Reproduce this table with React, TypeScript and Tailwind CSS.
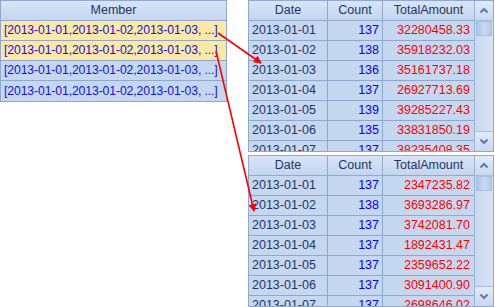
import React from "react";

const font = { fontFamily: '"Liberation Sans", Arial, sans-serif' };

const top = [
  ["2013-01-01", "137", "32280458.33"],
  ["2013-01-02", "138", "35918232.03"],
  ["2013-01-03", "136", "35161737.18"],
  ["2013-01-04", "137", "26927713.69"],
  ["2013-01-05", "139", "39285227.43"],
  ["2013-01-06", "135", "33831850.19"],
  ["2013-01-07", "137", "38235408.35"],
];
const bottom = [
  ["2013-01-01", "137", "2347235.82"],
  ["2013-01-02", "138", "3693286.97"],
  ["2013-01-03", "137", "3742081.70"],
  ["2013-01-04", "137", "1892431.47"],
  ["2013-01-05", "137", "2359652.22"],
  ["2013-01-06", "137", "3091400.90"],
  ["2013-01-07", "137", "2698646.02"],
];

function Chevron({ up }: { up?: boolean }) {
  return (
    <svg width="10" height="7" viewBox="0 0 10 7">
      <path
        d={up ? "M1.5 5.5 L5 2 L8.5 5.5" : "M1.5 1.5 L5 5 L8.5 1.5"}
        fill="none"
        stroke="#5a7aa8"
        strokeWidth="2"
      />
    </svg>
  );
}

function Scrollbar() {
  return (
    <div className="w-[19px] flex flex-col border-l border-[#9cb3d8] bg-gradient-to-r from-[#c9d8ef] to-[#d9e4f4]">
      <div className="h-[20px] flex items-center justify-center border-b border-[#a9bee0] bg-gradient-to-b from-[#e3ebf7] to-[#c9d8ef]">
        <Chevron up />
      </div>
      <div className="h-[15px] mx-[1px] bg-gradient-to-r from-[#a9c4ec] via-[#c8daf4] to-[#b3caec] border border-[#a4bde3]" />
      <div className="flex-1" />
      <div className="h-[20px] flex items-center justify-center border-t border-[#a9bee0] bg-gradient-to-b from-[#e3ebf7] to-[#c9d8ef]">
        <Chevron />
      </div>
    </div>
  );
}

function DataTable({ rows }: { rows: string[][] }) {
  return (
    <div className="h-[152px] flex border border-[#8ea8d2] bg-white overflow-hidden">
      <div className="flex-1 flex flex-col overflow-hidden">
        <div className="flex h-[20px] shrink-0 bg-gradient-to-b from-[#d9e5f5] to-[#c3d5ee] text-[#1e3466] border-b border-[#8ea8d2]">
          <div className="w-[79px] border-r border-[#8ea8d2] flex items-center justify-center">Date</div>
          <div className="w-[55px] border-r border-[#8ea8d2] flex items-center justify-center">Count</div>
          <div className="flex-1 flex items-center justify-center">TotalAmount</div>
        </div>
        {rows.map((r, i) => (
          <div key={i} className="flex h-[20px] shrink-0 bg-[#c6d8f0] border-b border-[#8ea8d2]">
            <div className="w-[79px] border-r border-[#8ea8d2] flex items-center pl-[3px] text-[#1e3466]">{r[0]}</div>
            <div className="w-[55px] border-r border-[#8ea8d2] flex items-center justify-end pr-[3px] text-[#0000ff]">{r[1]}</div>
            <div className="flex-1 flex items-center justify-end pr-[4px] text-[#ff0000]">{r[2]}</div>
          </div>
        ))}
      </div>
      <Scrollbar />
    </div>
  );
}

export default function App() {
  const member = "[2013-01-01,2013-01-02,2013-01-03, ...]";
  return (
    <div className="relative w-[495px] h-[307px] bg-white text-[12.5px] leading-none overflow-hidden" style={font}>
      <div className="flex">
        <div className="w-[227px] shrink-0">
          <div className="border border-[#8ea8d2]">
            <div className="h-[20px] flex items-center justify-center bg-gradient-to-b from-[#d9e5f5] to-[#c3d5ee] text-[#1e3466] border-b border-[#8ea8d2]">
              Member
            </div>
            {[0, 1, 2, 3].map((i) => (
              <div
                key={i}
                className={`h-[20px] flex items-center pl-[3px] text-[12.2px] tracking-[-0.1px] text-[#1010e8] whitespace-nowrap overflow-hidden ${
                  i < 2 ? "bg-[#fde8a4]" : "bg-[#c6d8f0]"
                } ${i < 3 ? "border-b border-[#8ea8d2]" : ""}`}
              >
                {member}
              </div>
            ))}
          </div>
        </div>
        <div className="ml-[21px] w-[246px] flex flex-col gap-[3px]">
          <DataTable rows={top} />
          <DataTable rows={bottom} />
        </div>
      </div>
      <svg className="absolute inset-0 pointer-events-none" width="495" height="307">
        <defs>
          <marker id="ah" markerWidth="8" markerHeight="8" refX="7" refY="4" orient="auto" markerUnits="userSpaceOnUse">
            <path d="M0 0 L8 4 L0 8 Z" fill="#ff0000" />
          </marker>
        </defs>
        <line x1="218" y1="33" x2="261" y2="63" stroke="#ff0000" strokeWidth="1.6" markerEnd="url(#ah)" />
        <line x1="216" y1="51" x2="254" y2="211" stroke="#ff0000" strokeWidth="1.6" markerEnd="url(#ah)" />
      </svg>
    </div>
  );
}
